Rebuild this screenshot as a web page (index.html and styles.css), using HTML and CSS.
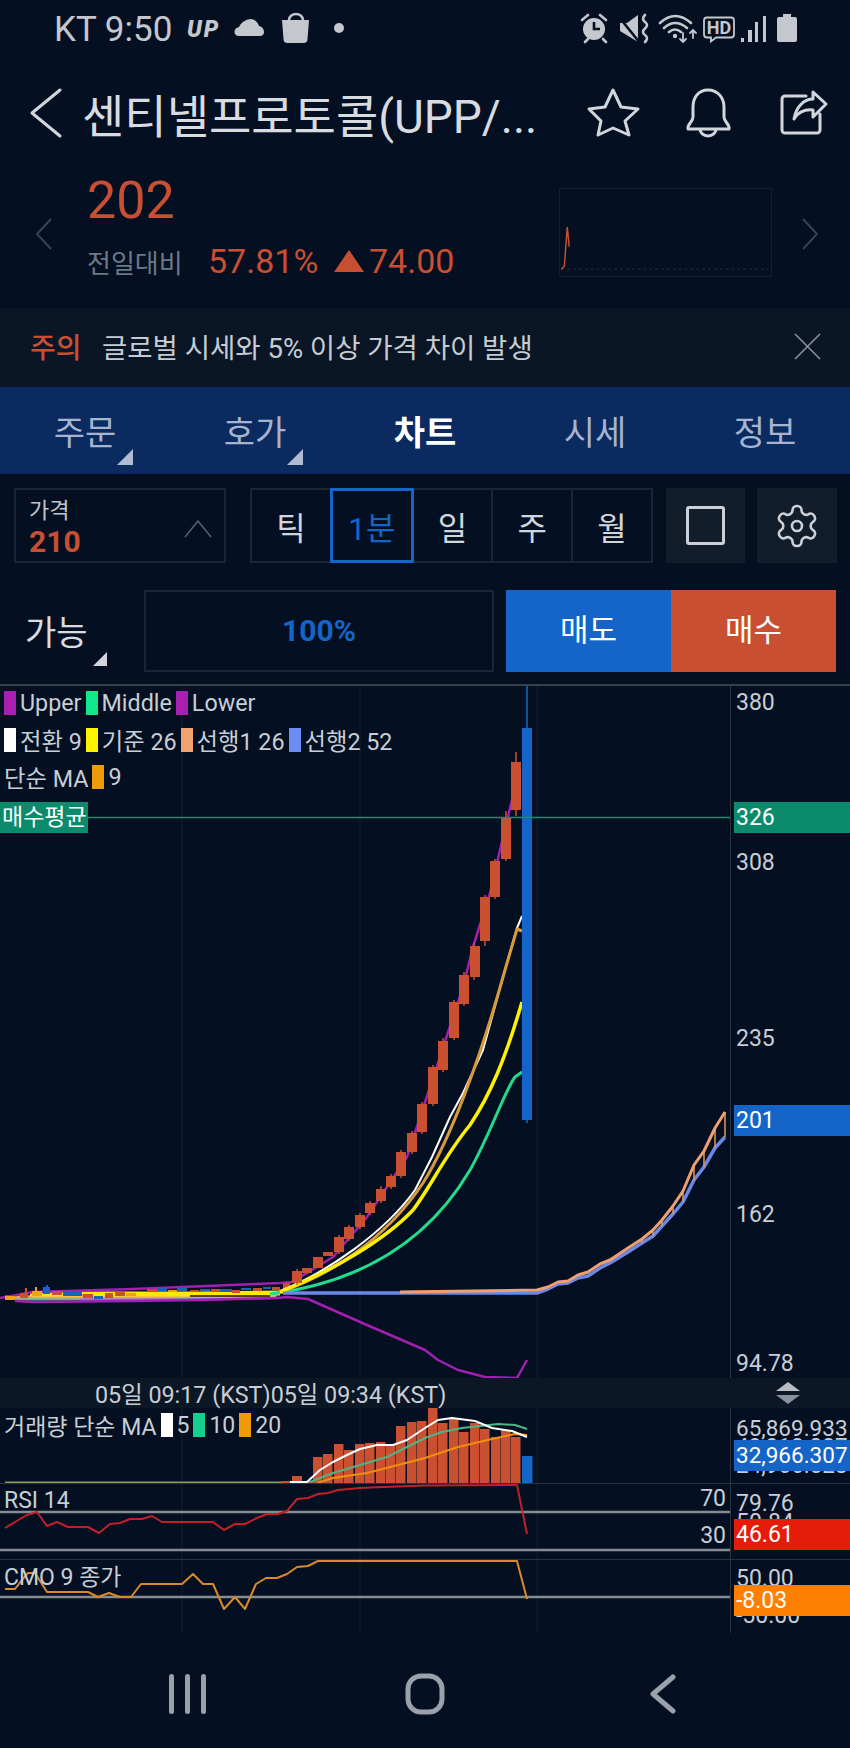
FILE: index.html
```html
<!DOCTYPE html>
<html lang="ko">
<head>
    <meta charset="UTF-8">
    <meta name="viewport" content="width=device-width, initial-scale=1.0">
    <title>센티넬프로토콜 차트</title>
    <link rel="stylesheet" href="styles.css">
</head>
<body>
    <!-- Status bar -->
    <div class="status">
        <span class="status-time">KT 9:50</span>
        <span class="status-up">UP</span>
        <svg class="status-left-icons" viewBox="232 12 112 32" width="112" height="32">
            <path class="icon-fill" d="M238 36C232 36 232 28 238 27C240 22 246 19 250 19C254 19 257 23 258 26C264 27 265 36 259 36Z"/>
            <path class="icon-fill" d="M281 20h27l-1.5 19a4 4 0 0 1-4 4h-16a4 4 0 0 1-4-4z"/>
            <path class="icon-line" d="M288 21v-1a7 6 0 0 1 14 0v1"/>
            <circle class="icon-fill" cx="338" cy="28" r="5"/>
        </svg>
        <svg class="status-right-icons" viewBox="578 12 222 32" width="222" height="32">
            <circle class="icon-fill" cx="594" cy="29" r="11"/>
            <path class="icon-cut" d="M594 22v7h6"/>
            <path class="icon-line" d="M582 20l6-5M600 15l6 5M585 42l3-3M603 39l3 3"/>
            <path class="icon-fill" d="M620 23h7l11-8v27l-18-11z"/>
            <path class="icon-cut" d="M619 17l21 26"/>
            <path class="icon-line" d="M645 15q-4 4 0 7t0 6.500t0 6.500t0 7"/>
            <path class="icon-line" d="M660 23Q675 9 691 23M664 28Q675 18 687 28M669 32Q675 27 681 32"/>
            <circle class="icon-fill" cx="675" cy="36" r="2.200"/>
            <path class="icon-line thin" d="M683 33v9M680 39l3 3l3-3M693 38v-8M690 33l3-3l3 3"/>
            <path class="icon-line thin" d="M707 17.500h24a3 3 0 0 1 3 3v14a3 3 0 0 1-3 3h-15l-5 4v-4h-4a3 3 0 0 1-3-3v-14a3 3 0 0 1 3-3z"/>
            <text class="hd-text" x="719" y="34" text-anchor="middle">HD</text>
            <path class="icon-fill" d="M741 38h3v4h-3zM748 30h4v12h-4zM755 22h3v20h-3zM763 16h3v26h-3z"/>
            <path class="icon-fill" d="M783 14h8v3h4a2 2 0 0 1 2 2v21a2 2 0 0 1-2 2h-16a2 2 0 0 1-2-2v-21a2 2 0 0 1 2-2h4z"/>
        </svg>
    </div>

    <!-- Title -->
    <div class="header">
        <svg class="back" viewBox="28 86 36 52" width="36" height="52"><path class="head-line" d="M60 89L32 112L60 135"/></svg>
        <h1 class="title">센티넬프로토콜(UPP/...</h1>
        <svg class="head-icon" viewBox="586 87 54 52" width="54" height="52"><path class="head-line" d="M613 90L621 107L638 109L625 121L629 135L613 128L598 135L601 121L589 109L605 107Z"/></svg>
        <svg class="head-icon" viewBox="684 87 50 52" width="50" height="52"><path class="head-line" d="M708 90C698 90 693 98 693 107V117C693 122 687 124 688 129H729C730 124 724 122 724 117V107C724 98 718 90 708 90ZM700 129a8 7 0 0 0 16 0"/></svg>
        <svg class="head-icon" viewBox="778 88 50 48" width="50" height="48"><path class="head-line" d="M806 95H785a3 3 0 0 0-3 3V129a3 3 0 0 0 3 3H817a3 3 0 0 0 3-3V113M813 91L826 103L813 116V109C804 108 797 112 794 118C796 106 804 98 813 98Z"/></svg>
    </div>

    <!-- Quote -->
    <div class="quote">
        <svg class="pager" viewBox="0 0 17 32" width="17" height="32"><path d="M16 1L2 16L16 31"/></svg>
        <div class="quote-info">
            <div class="quote-price">202</div>
            <div class="quote-change">
                <span class="quote-label">전일대비</span>
                <span class="quote-rate">57.81%</span>
                <span class="quote-diff"><span class="tri-up"></span>74.00</span>
            </div>
        </div>
        <svg class="spark" viewBox="559 188 213 89" width="213" height="89">
            <path class="spark-base" d="M559 270H771"/>
            <path class="spark-line" d="M559 270L562 267L565 227L567 247"/>
        </svg>
        <svg class="pager next" viewBox="0 0 17 32" width="17" height="32"><path d="M1 1L15 16L1 31"/></svg>
    </div>

    <!-- Notice -->
    <div class="notice">
        <span class="notice-tag">주의</span>
        <span class="notice-text">글로벌 시세와 5% 이상 가격 차이 발생</span>
        <svg class="notice-close" viewBox="0 0 27 27" width="27" height="27"><path d="M1 1L26 26M26 1L1 26"/></svg>
    </div>

    <!-- Tabs -->
    <div class="tabs">
        <div class="tab"><span class="tab-label has-menu">주문</span></div>
        <div class="tab"><span class="tab-label has-menu">호가</span></div>
        <div class="tab active"><span class="tab-label">차트</span></div>
        <div class="tab"><span class="tab-label">시세</span></div>
        <div class="tab"><span class="tab-label">정보</span></div>
    </div>

    <!-- Chart options -->
    <div class="toolbar">
        <div class="price-select">
            <div>
                <div class="price-select-label">가격</div>
                <div class="price-select-value">210</div>
            </div>
            <svg viewBox="0 0 28 18" width="28" height="18"><path d="M1 17L14 1L27 17"/></svg>
        </div>
        <div class="seg">
            <div class="seg-item">틱</div>
            <div class="seg-item active">1분</div>
            <div class="seg-item">일</div>
            <div class="seg-item">주</div>
            <div class="seg-item">월</div>
        </div>
        <div class="tool-btn"><span class="tool-square"></span></div>
        <div class="tool-btn gear">
            <svg viewBox="0 0 24 24" width="48" height="48"><path d="M12.220 2h-.440a2 2 0 0 0-2 2v.180a2 2 0 0 1-1 1.730l-.430.250a2 2 0 0 1-2 0l-.150-.080a2 2 0 0 0-2.730.730l-.220.380a2 2 0 0 0 .730 2.730l.150.100a2 2 0 0 1 1 1.720v.510a2 2 0 0 1-1 1.740l-.150.090a2 2 0 0 0-.730 2.730l.220.380a2 2 0 0 0 2.730.730l.150-.080a2 2 0 0 1 2 0l.430.250a2 2 0 0 1 1 1.730V20a2 2 0 0 0 2 2h.440a2 2 0 0 0 2-2v-.180a2 2 0 0 1 1-1.730l.430-.250a2 2 0 0 1 2 0l.150.080a2 2 0 0 0 2.730-.730l.220-.390a2 2 0 0 0-.730-2.730l-.150-.080a2 2 0 0 1-1-1.740v-.500a2 2 0 0 1 1-1.740l.150-.090a2 2 0 0 0 .730-2.730l-.220-.380a2 2 0 0 0-2.730-.730l-.150.080a2 2 0 0 1-2 0l-.430-.250a2 2 0 0 1-1-1.730V4a2 2 0 0 0-2-2z"/><circle cx="12" cy="12" r="2.500"/></svg>
        </div>
    </div>

    <!-- Order row -->
    <div class="order">
        <div class="order-able">가능</div>
        <div class="order-rate">100%</div>
        <div class="order-btn sell">매도</div>
        <div class="order-btn buy">매수</div>
    </div>

    <!-- Chart -->
    <div class="chart">
        <div class="panel main">
            <div class="legend">
                <div class="legend-row">
                    <span class="swatch purple"></span><span>Upper</span>
                    <span class="swatch mint"></span><span>Middle</span>
                    <span class="swatch purple"></span><span>Lower</span>
                </div>
                <div class="legend-row">
                    <span class="swatch white"></span><span>전환 9</span>
                    <span class="swatch yellow"></span><span>기준 26</span>
                    <span class="swatch peach"></span><span>선행1 26</span>
                    <span class="swatch periwinkle"></span><span>선행2 52</span>
                </div>
                <div class="legend-row">
                    <span>단순 MA</span>
                    <span class="swatch orange"></span><span>9</span>
                </div>
            </div>
            <svg class="panel-svg" viewBox="0 686 850 692" width="850" height="692">
                <path class="grid" d="M182 686V1378M360 686V1378M537 686V1378"/>

                <!-- flat part before the run up -->
                <path class="ln-band-lav" d="M80 1299L200 1298.500L277 1297"/>
                <path class="ln-band-mint" d="M15 1298H80"/>
                <path class="ln-band-peach" d="M5 1297L33 1297L130 1297L275 1296"/>
                <path class="ln-flat-yellow" d="M30 1294L200 1294L280 1293"/>
                <path class="ln-purple" d="M0 1298L33 1292L133 1289L280 1283L292 1282L333 1257L367 1217L407 1157L463 987L473 947L490 893L500 850L512 800"/>
                <path class="ln-purple" d="M15 1301L33 1302L133 1301L200 1300L277 1298L287 1297L308 1299L367 1325L425 1350L438 1360L458 1370L485 1377L517 1378L527 1360"/>
                <path class="candle-orange" d="M5 1296h10v4h-10zM32 1291h10v5h-10zM35 1287h2v4h-2zM73 1294h10v2h-10zM126 1293h10v3h-10zM168 1290h9v2h-9z"/>
                <path class="candle-red" d="M20 1293h8v5h-8zM25 1288h2v5h-2zM52 1291h10v4h-10zM83 1294h10v4h-10zM105 1293h8v5h-8zM115 1292h10v4h-10zM147 1289h10v3h-10zM190 1290h9v2h-9zM211 1289h9v3h-9zM232 1290h8v3h-8zM253 1288h9v3h-9zM272 1287h8v3h-8zM283 1283h7v7h-7z"/>
                <path class="candle-blue" d="M43 1287h7v7h-7zM46 1285h2v2h-2zM63 1292h19v4h-19zM94 1296h9v3h-9zM157 1288h10v3h-10zM177 1288h10v3h-10zM200 1289h10v2h-10zM220 1289h12v3h-12zM241 1288h10v2h-10zM263 1287h8v2h-8z"/>
                <path class="ln-dark" d="M190 1296H270"/>

                <!-- moving lines -->
                <path class="ln-mint" d="M270 1294C340 1285 420 1255 470 1170C490 1135 505 1090 515 1077L522 1072"/>
                <path class="ln-white" d="M280 1291C328 1272 385 1232 415 1190L432 1157L450 1117L463 1093L483 1050L505 970L517 928L522 916"/>
                <path class="ln-ma" d="M280 1292C330 1275 385 1240 423 1183C450 1140 480 1060 505 970L517 929L522 931"/>
                <path class="ln-yellow" d="M280 1292C330 1272 385 1240 413 1210C430 1188 445 1155 470 1125C490 1095 505 1060 522 1002"/>

                <!-- candles -->
                <path class="wick-red" d="M516 752V816M506 811V861M495 859V899M485 895V946M474 943V980M464 972V1006M454 1000V1040M443 1038V1072M433 1065V1106M422 1102V1134M412 1131V1154M401 1150V1178M391 1174V1189M381 1186V1203M370 1201V1215M360 1213V1229M349 1225V1241M339 1235V1254M297 1269V1285"/>
                <path class="candle-red" d="M292 1271h10v12h-10zM302 1268h10v5h-10zM313 1257h10v11h-10zM323 1252h10v4h-10zM334 1237h10v15h-10zM344 1227h10v12h-10zM355 1215h10v12h-10zM365 1203h10v10h-10zM376 1189h10v12h-10zM386 1176h10v11h-10zM396 1152h10v24h-10zM407 1133h10v19h-10zM417 1104h10v28h-10zM428 1067h10v37h-10zM438 1041h10v29h-10zM449 1002h10v36h-10zM459 975h10v29h-10zM470 946h10v31h-10zM480 897h10v44h-10zM490 861h10v36h-10zM501 818h10v41h-10zM511 762h10v48h-10z"/>
                <path class="wick-blue" d="M527 686V1123"/>
                <rect class="bar-blue" x="522" y="728" width="10" height="392"/>

                <!-- cloud -->
                <path class="ln-cloud-b" d="M283 1293H537L548 1289L558 1284L568 1283L578 1278L588 1276L600 1268L610 1263L628 1252L642 1243L653 1236L662 1226L673 1214L683 1202L694 1180L704 1167L715 1148L725 1137"/>
                <path class="ln-cloud-h" d="M642 1239V1243M653 1230V1236M662 1220V1226M673 1206V1214M683 1191V1202M694 1165V1180M704 1151V1167M715 1128V1148M725 1112V1137"/>
                <path class="ln-cloud-a" d="M400 1292L537 1290L548 1287L558 1282L568 1281L578 1275L588 1272L600 1264L610 1260L628 1248L642 1239L653 1230L662 1220L673 1206L683 1191L694 1165L704 1151L715 1128L725 1112"/>

                <path class="avg-line" d="M88 817.500H730"/>
                <path class="axis-line" d="M730.500 686V1378"/>

                <rect class="tag-green" x="0" y="802" width="88" height="31"/>
                <text class="tag-text" x="2" y="825">매수평균</text>

                <text class="ax" x="736" y="710">380</text>
                <text class="ax" x="736" y="870">308</text>
                <text class="ax" x="736" y="1046">235</text>
                <text class="ax" x="736" y="1222">162</text>
                <text class="ax" x="736" y="1371">94.78</text>
                <rect class="tag-green" x="734" y="802" width="116" height="31"/>
                <text class="tag-text" x="736" y="825">326</text>
                <rect class="tag-blue" x="734" y="1105" width="116" height="31"/>
                <text class="tag-text" x="736" y="1128">201</text>
            </svg>
        </div>

        <div class="timebar">
            <span>05일 09:17 (KST)</span><span>05일 09:34 (KST)</span>
            <svg class="sort" viewBox="0 0 26 24" width="26" height="24">
                <path class="sort-up" d="M13 1L25 10H1z"/>
                <path class="sort-down" d="M1 14H25L13 23z"/>
            </svg>
        </div>

        <div class="panel vol">
            <div class="legend">
                <div class="legend-row">
                    <span>거래량 단순 MA</span>
                    <span class="swatch white"></span><span>5</span>
                    <span class="swatch green"></span><span>10</span>
                    <span class="swatch orange"></span><span>20</span>
                </div>
            </div>
            <svg class="panel-svg" viewBox="0 1408 850 75" width="850" height="75">
                <path class="grid" d="M182 1408V1483M360 1408V1483M537 1408V1483"/>
                <path class="vol-base" d="M5 1482.500H300"/>
                <path class="candle-red" d="M282 1481h10v2h-10zM292 1476h10v7h-10zM303 1481h10v2h-10zM313 1457h9.500v26h-9.500zM323 1454h9.500v29h-9.500zM334 1444h9.500v39h-9.500zM344 1450h9.500v33h-9.500zM355 1444h9.500v39h-9.500zM365 1443h9.500v40h-9.500zM376 1442h9.500v41h-9.500zM386 1445h9.500v38h-9.500zM396 1426h9.500v57h-9.500zM407 1422h9.500v61h-9.500zM417 1421h9.500v62h-9.500zM428 1408h9.500v75h-9.500zM438 1423h9.500v60h-9.500zM449 1418h9.500v65h-9.500zM459 1432h9.500v51h-9.500zM470 1423h9.500v60h-9.500zM480 1429h9.500v54h-9.500zM491 1437h9.500v46h-9.500zM501 1430h9.500v53h-9.500zM511 1437h9.500v46h-9.500z"/>
                <rect class="bar-blue" x="522" y="1456" width="10.500" height="27"/>
                <path class="vol-green" d="M310 1482L333 1473L360 1465L387 1457L417 1442L425 1438L442 1432L462 1428L498 1424L515 1425L527 1429"/>
                <path class="vol-orange" d="M317 1483L333 1478L367 1473L425 1458L458 1447L492 1439L515 1434L527 1435"/>
                <path class="vol-white" d="M290 1482H307L320 1470L333 1462L347 1455L360 1449L377 1445L393 1445L407 1440L425 1428L438 1420L452 1418L475 1421L492 1428L512 1431L527 1437"/>
                <path class="axis-line" d="M730.500 1408V1483"/>
                <text class="ax small" x="736" y="1436">65,869.933</text>
                <text class="ax small" x="736" y="1454">49,918.087</text>
                <text class="ax small" x="736" y="1473">24,966.528</text>
                <rect class="tag-blue" x="734" y="1440" width="116" height="31"/>
                <text class="tag-text small" x="736" y="1463">32,966.307</text>
            </svg>
        </div>

        <div class="panel rsi">
            <div class="legend">
                <div class="legend-row"><span>RSI 14</span></div>
            </div>
            <svg class="panel-svg" viewBox="0 1484 850 75" width="850" height="75">
                <path class="grid" d="M182 1484V1559M360 1484V1559M537 1484V1559"/>
                <path class="level" d="M0 1512H730M0 1550H730"/>
                <path class="ln-rsi" d="M5 1528L15 1522L27 1515L37 1512L47 1526L57 1522L68 1527L88 1527L99 1533L110 1524L120 1523L130 1519L142 1519L152 1516L162 1522L213 1522L224 1530L235 1524L245 1524L257 1518L267 1514L278 1514L287 1511L297 1499L308 1498L318 1494L328 1493L338 1490L360 1488L383 1487L425 1485.500L517 1485L527 1534"/>
                <path class="axis-line" d="M730.500 1484V1559"/>
                <text class="ax" x="726" y="1506" text-anchor="end">70</text>
                <text class="ax" x="726" y="1543" text-anchor="end">30</text>
                <text class="ax" x="736" y="1511">79.76</text>
                <text class="ax" x="736" y="1530">50.84</text>
                <rect class="tag-red" x="734" y="1519" width="116" height="31"/>
                <text class="tag-text" x="736" y="1542">46.61</text>
            </svg>
        </div>

        <div class="panel cmo">
            <div class="legend">
                <div class="legend-row"><span>CMO 9 종가</span></div>
            </div>
            <svg class="panel-svg" viewBox="0 1560 850 73" width="850" height="73">
                <path class="grid" d="M182 1560V1633M360 1560V1633M537 1560V1633"/>
                <path class="level" d="M0 1597H730"/>
                <path class="ln-cmo" d="M5 1589L15 1589L22 1580L28 1573L35 1573L47 1592L88 1592L98 1597L109 1593L120 1597L131 1597L141 1584L182 1584L193 1574L203 1584L213 1584L224 1609L235 1597L245 1609L256 1584L266 1578L277 1578L287 1574L297 1567L308 1566L318 1561L517 1561L527 1599"/>
                <path class="axis-line" d="M730.500 1560V1633"/>
                <text class="ax" x="736" y="1586">50.00</text>
                <text class="ax" x="736" y="1623">-50.00</text>
                <rect class="tag-orange" x="734" y="1585" width="116" height="31"/>
                <text class="tag-text" x="736" y="1608">-8.03</text>
            </svg>
        </div>
    </div>

    <!-- Navigation bar -->
    <div class="nav">
        <svg viewBox="0 0 37 40" width="37" height="40"><path d="M2.500 2.500V37.500M18.500 2.500V37.500M34.500 2.500V37.500"/></svg>
        <svg viewBox="0 0 40 42" width="40" height="42"><rect x="3" y="3" width="34" height="36" rx="13"/></svg>
        <svg viewBox="0 0 26 40" width="26" height="40"><path d="M23 3L3 20L23 37"/></svg>
    </div>
</body>
</html>
```

FILE: styles.css
```css
* {
    box-sizing: border-box;
}
body {
    margin: 0;
    width: 850px;
    height: 1748px;
    overflow: hidden;
    background-color: #041021;
    color: #d2d6dc;
    font-family: Roboto, "Noto Sans CJK KR", sans-serif;
}

/* status bar */
.status {
    display: flex;
    align-items: center;
    height: 56px;
    padding-left: 54px;
    color: #c4c8ce;
}
.status-time {
    font-size: 35px;
    width: 120px;
    margin-top: 3px;
    white-space: nowrap;
}
.status-up {
    font-size: 23px;
    font-weight: 900;
    font-style: italic;
    letter-spacing: 2px;
    width: 46px;
    margin-left: 13px;
    margin-top: 2px;
}
.status-right-icons {
    margin-left: 233px;
}
.icon-fill {
    fill: #c4c8ce;
}
.icon-line {
    fill: none;
    stroke: #c4c8ce;
    stroke-width: 2.6;
    stroke-linecap: round;
}
.icon-line.thin {
    stroke-width: 1.8;
}
.icon-cut {
    fill: none;
    stroke: #041021;
    stroke-width: 2.6;
}
.hd-text {
    font-size: 18px;
    font-weight: 700;
    fill: #c4c8ce;
}

/* title */
.header {
    display: flex;
    align-items: center;
    height: 104px;
    padding: 10px 0 0 28px;
}
.back {
    flex: none;
}
.title {
    width: 504px;
    margin: 0 0 0 18px;
    font-size: 46px;
    font-weight: 400;
    white-space: nowrap;
    color: #d8dce1;
}
.head-icon {
    flex: none;
}
.head-icon:nth-of-type(3) {
    margin-left: 44px;
}
.head-icon:nth-of-type(4) {
    margin-left: 44px;
}
.head-line {
    fill: none;
    stroke: #d2d6dc;
    stroke-width: 3;
    stroke-linejoin: round;
    stroke-linecap: round;
}

/* quote */
.quote {
    display: flex;
    align-items: center;
    height: 148px;
    padding-left: 35px;
}
.pager {
    flex: none;
}
.pager path {
    fill: none;
    stroke: #364454;
    stroke-width: 2;
}
.pager.next {
    margin-left: 30px;
}
.quote-info {
    width: 472px;
    margin-left: 35px;
    margin-top: -14px;
}
.quote-price {
    font-size: 52px;
    line-height: 58px;
    color: #c94f32;
}
.quote-change {
    display: flex;
    align-items: center;
    height: 42px;
    margin-top: 10px;
}
.quote-label {
    font-size: 26px;
    color: #6c7986;
    width: 121px;
}
.quote-rate {
    font-size: 34px;
    color: #c94f32;
    width: 126px;
}
.quote-diff {
    display: flex;
    align-items: center;
    font-size: 34px;
    color: #c94f32;
}
.tri-up {
    width: 0;
    height: 0;
    margin-right: 5px;
    border-left: 15px solid transparent;
    border-right: 15px solid transparent;
    border-bottom: 22px solid #c94f32;
}
.spark {
    flex: none;
    margin-top: -4px;
    border: 1px solid #131f2e;
}
.spark-base {
    fill: none;
    stroke: #233040;
    stroke-width: 1;
    stroke-dasharray: 3 3;
}
.spark-line {
    fill: none;
    stroke: #c94f32;
    stroke-width: 1.5;
}

/* notice */
.notice {
    display: flex;
    align-items: center;
    height: 79px;
    padding: 0 0 3px 30px;
    background: #0a1626;
}
.notice-tag {
    width: 72px;
    font-size: 28px;
    font-weight: 500;
    color: #c94f32;
}
.notice-text {
    width: 692px;
    font-size: 27.500px;
    color: #c6ccd3;
}
.notice-close path {
    fill: none;
    stroke: #8c95a1;
    stroke-width: 1.500;
}

/* tabs */
.tabs {
    display: grid;
    grid-template-columns: repeat(5, 170px);
    height: 87px;
    background: #0a2a60;
}
.tab {
    display: flex;
    align-items: center;
    justify-content: center;
    font-size: 34px;
    color: #a6b4cf;
}
.tab.active {
    color: #fff;
    font-weight: 700;
}
.tab-label {
    position: relative;
}
.has-menu::after {
    content: "";
    position: absolute;
    right: -17px;
    bottom: -10px;
    border-left: 16px solid transparent;
    border-bottom: 16px solid #aebbd2;
}

/* chart options */
.toolbar {
    display: flex;
    height: 75px;
    margin-top: 14px;
    padding-left: 14px;
}
.price-select {
    display: flex;
    align-items: center;
    justify-content: space-between;
    width: 212px;
    padding: 2px 12px 0 13px;
    border: 2px solid #1a2635;
}
.price-select svg {
    margin-top: 4px;
}
.price-select path {
    fill: none;
    stroke: #566272;
    stroke-width: 1.500;
}
.price-select-label {
    font-size: 22px;
    line-height: 30px;
    color: #c0c5cc;
}
.price-select-value {
    font-size: 30px;
    line-height: 32px;
    font-weight: 700;
    color: #c94f32;
}
.seg {
    display: flex;
    width: 401px;
    margin-left: 26px;
}
.seg-item {
    flex: 1;
    display: flex;
    align-items: center;
    justify-content: center;
    margin-left: -2px;
    font-size: 32px;
    color: #d2d6dc;
    border: 2px solid #1a2635;
}
.seg-item.active {
    position: relative;
    color: #1565c8;
    border: 3px solid #1565c8;
}
.tool-btn {
    display: flex;
    align-items: center;
    justify-content: center;
    width: 79px;
    margin-left: 13px;
    background: #121d2b;
}
.tool-btn.gear {
    width: 80px;
    margin-left: 12px;
}
.tool-square {
    width: 39px;
    height: 39px;
    border: 3px solid #ccd0d6;
    border-radius: 3px;
}
.gear path,
.gear circle {
    fill: none;
    stroke: #ccd0d6;
    stroke-width: 1.300;
}

/* order row */
.order {
    display: flex;
    height: 82px;
    margin-top: 27px;
    padding-left: 25px;
}
.order-able {
    position: relative;
    width: 119px;
    line-height: 86px;
    font-size: 34px;
    color: #d8dce1;
}
.order-able::after {
    content: "";
    position: absolute;
    left: 68px;
    bottom: 6px;
    border-left: 14px solid transparent;
    border-bottom: 14px solid #d2d6dc;
}
.order-rate {
    width: 350px;
    line-height: 78px;
    text-align: center;
    font-size: 30px;
    font-weight: 700;
    color: #1565c8;
    border: 2px solid #1a2635;
}
.order-btn {
    width: 165px;
    line-height: 82px;
    text-align: center;
    font-size: 31px;
    color: #fff;
}
.order-btn.sell {
    margin-left: 12px;
    background: #1565c8;
}
.order-btn.buy {
    background: #c94f32;
}

/* chart */
.chart {
    margin-top: 12px;
    border-top: 2px solid #363f4c;
    overflow: hidden;
}
.panel {
    position: relative;
}
.panel-svg {
    display: block;
}
.panel.vol,
.panel.rsi {
    border-bottom: 1px solid #2a3441;
}
.legend {
    position: absolute;
    z-index: 1;
    left: 4px;
    display: flex;
    flex-direction: column;
    gap: 13px;
    font-size: 23.300px;
    color: #c8ced6;
}
.panel.main .legend {
    top: 5px;
}
.panel.vol .legend {
    top: 5px;
    font-size: 23px;
}
.panel.rsi .legend {
    top: 4px;
    font-size: 23px;
}
.panel.cmo .legend {
    top: 3px;
    font-size: 23px;
}
.legend-row {
    display: flex;
    align-items: center;
    gap: 4px;
    height: 24px;
    white-space: nowrap;
}
.swatch {
    width: 12px;
    height: 24px;
}
.swatch.purple { background: #a81fb2; }
.swatch.mint { background: #0fe98b; }
.swatch.white { background: #fff; }
.swatch.yellow { background: #fff200; }
.swatch.peach { background: #f2a26e; }
.swatch.periwinkle { background: #6b8cf0; }
.swatch.orange { background: #ee9a0a; }
.swatch.green { background: #14cf8f; }

.grid {
    fill: none;
    stroke: #121e2d;
    stroke-width: 1;
}
.axis-line {
    fill: none;
    stroke: #2a3441;
    stroke-width: 1;
}
.avg-line {
    fill: none;
    stroke: #1f8a72;
    stroke-width: 1.500;
}
.ax {
    font-size: 23px;
    fill: #c8ced6;
}
.ax.small,
.tag-text.small {
    font-size: 22.500px;
}
.tag-text {
    font-size: 23px;
    fill: #fff;
}
.tag-green { fill: #0b8a6c; }
.tag-blue { fill: #1565c8; }
.tag-red { fill: #e61c0a; }
.tag-orange { fill: #ff8000; }

.candle-red { fill: #cb5032; }
.candle-orange { fill: #f0a020; }
.candle-blue { fill: #1a63b8; }
.bar-blue { fill: #1565c8; }
.wick-red {
    fill: none;
    stroke: #cb5032;
    stroke-width: 1.500;
}
.wick-blue {
    fill: none;
    stroke: #1565c8;
    stroke-width: 1.500;
}

.ln-purple,
.ln-mint,
.ln-white,
.ln-ma,
.ln-yellow,
.ln-dark,
.ln-band-mint,
.ln-band-lav,
.ln-band-peach,
.ln-flat-yellow,
.ln-cloud-a,
.ln-cloud-b,
.ln-cloud-h,
.vol-base,
.vol-green,
.vol-orange,
.vol-white,
.level,
.ln-rsi,
.ln-cmo {
    fill: none;
    stroke-linejoin: round;
}
.ln-purple { stroke: #a21fb0; stroke-width: 2.500; }
.ln-mint { stroke: #1fdc8e; stroke-width: 3; }
.ln-white { stroke: #fff; stroke-width: 2; }
.ln-ma { stroke: #d69a3c; stroke-width: 3; }
.ln-yellow { stroke: #fff000; stroke-width: 3.500; }
.ln-dark { stroke: #1c1a10; stroke-width: 1.500; }
.ln-band-mint { stroke: #2fd09a; stroke-width: 5; }
.ln-band-lav { stroke: #7f6fe0; stroke-width: 4; }
.ln-band-peach { stroke: #f0a070; stroke-width: 3; }
.ln-flat-yellow { stroke: #ffe800; stroke-width: 5; }
.ln-cloud-a { stroke: #f0a070; stroke-width: 3; }
.ln-cloud-b { stroke: #6b88e6; stroke-width: 3.500; }
.ln-cloud-h { stroke: #e09a5a; stroke-width: 1.500; }

.vol-base { stroke: #8a9a50; stroke-width: 2; }
.vol-green { stroke: #4db585; stroke-width: 2; }
.vol-orange { stroke: #f0900a; stroke-width: 2; }
.vol-white { stroke: #fff; stroke-width: 2; }
.level { stroke: #868b92; stroke-width: 2.500; }
.ln-rsi { stroke: #c02128; stroke-width: 2; }
.ln-cmo { stroke: #d98a2a; stroke-width: 2; }

/* time bar */
.timebar {
    display: flex;
    align-items: center;
    height: 30px;
    padding-left: 95px;
    font-size: 23.300px;
    white-space: nowrap;
    color: #c8ced6;
    background: #0c1726;
}
.sort {
    margin-left: 329px;
}
.sort-up { fill: #b9bec6; }
.sort-down { fill: #8b919a; }

/* navigation */
.nav {
    display: grid;
    grid-template-columns: repeat(3, 238px);
    justify-content: center;
    justify-items: center;
    align-items: center;
    height: 122px;
}
.nav path,
.nav rect {
    fill: none;
    stroke: #9aa1ab;
    stroke-width: 5;
    stroke-linecap: round;
    stroke-linejoin: round;
}
```
